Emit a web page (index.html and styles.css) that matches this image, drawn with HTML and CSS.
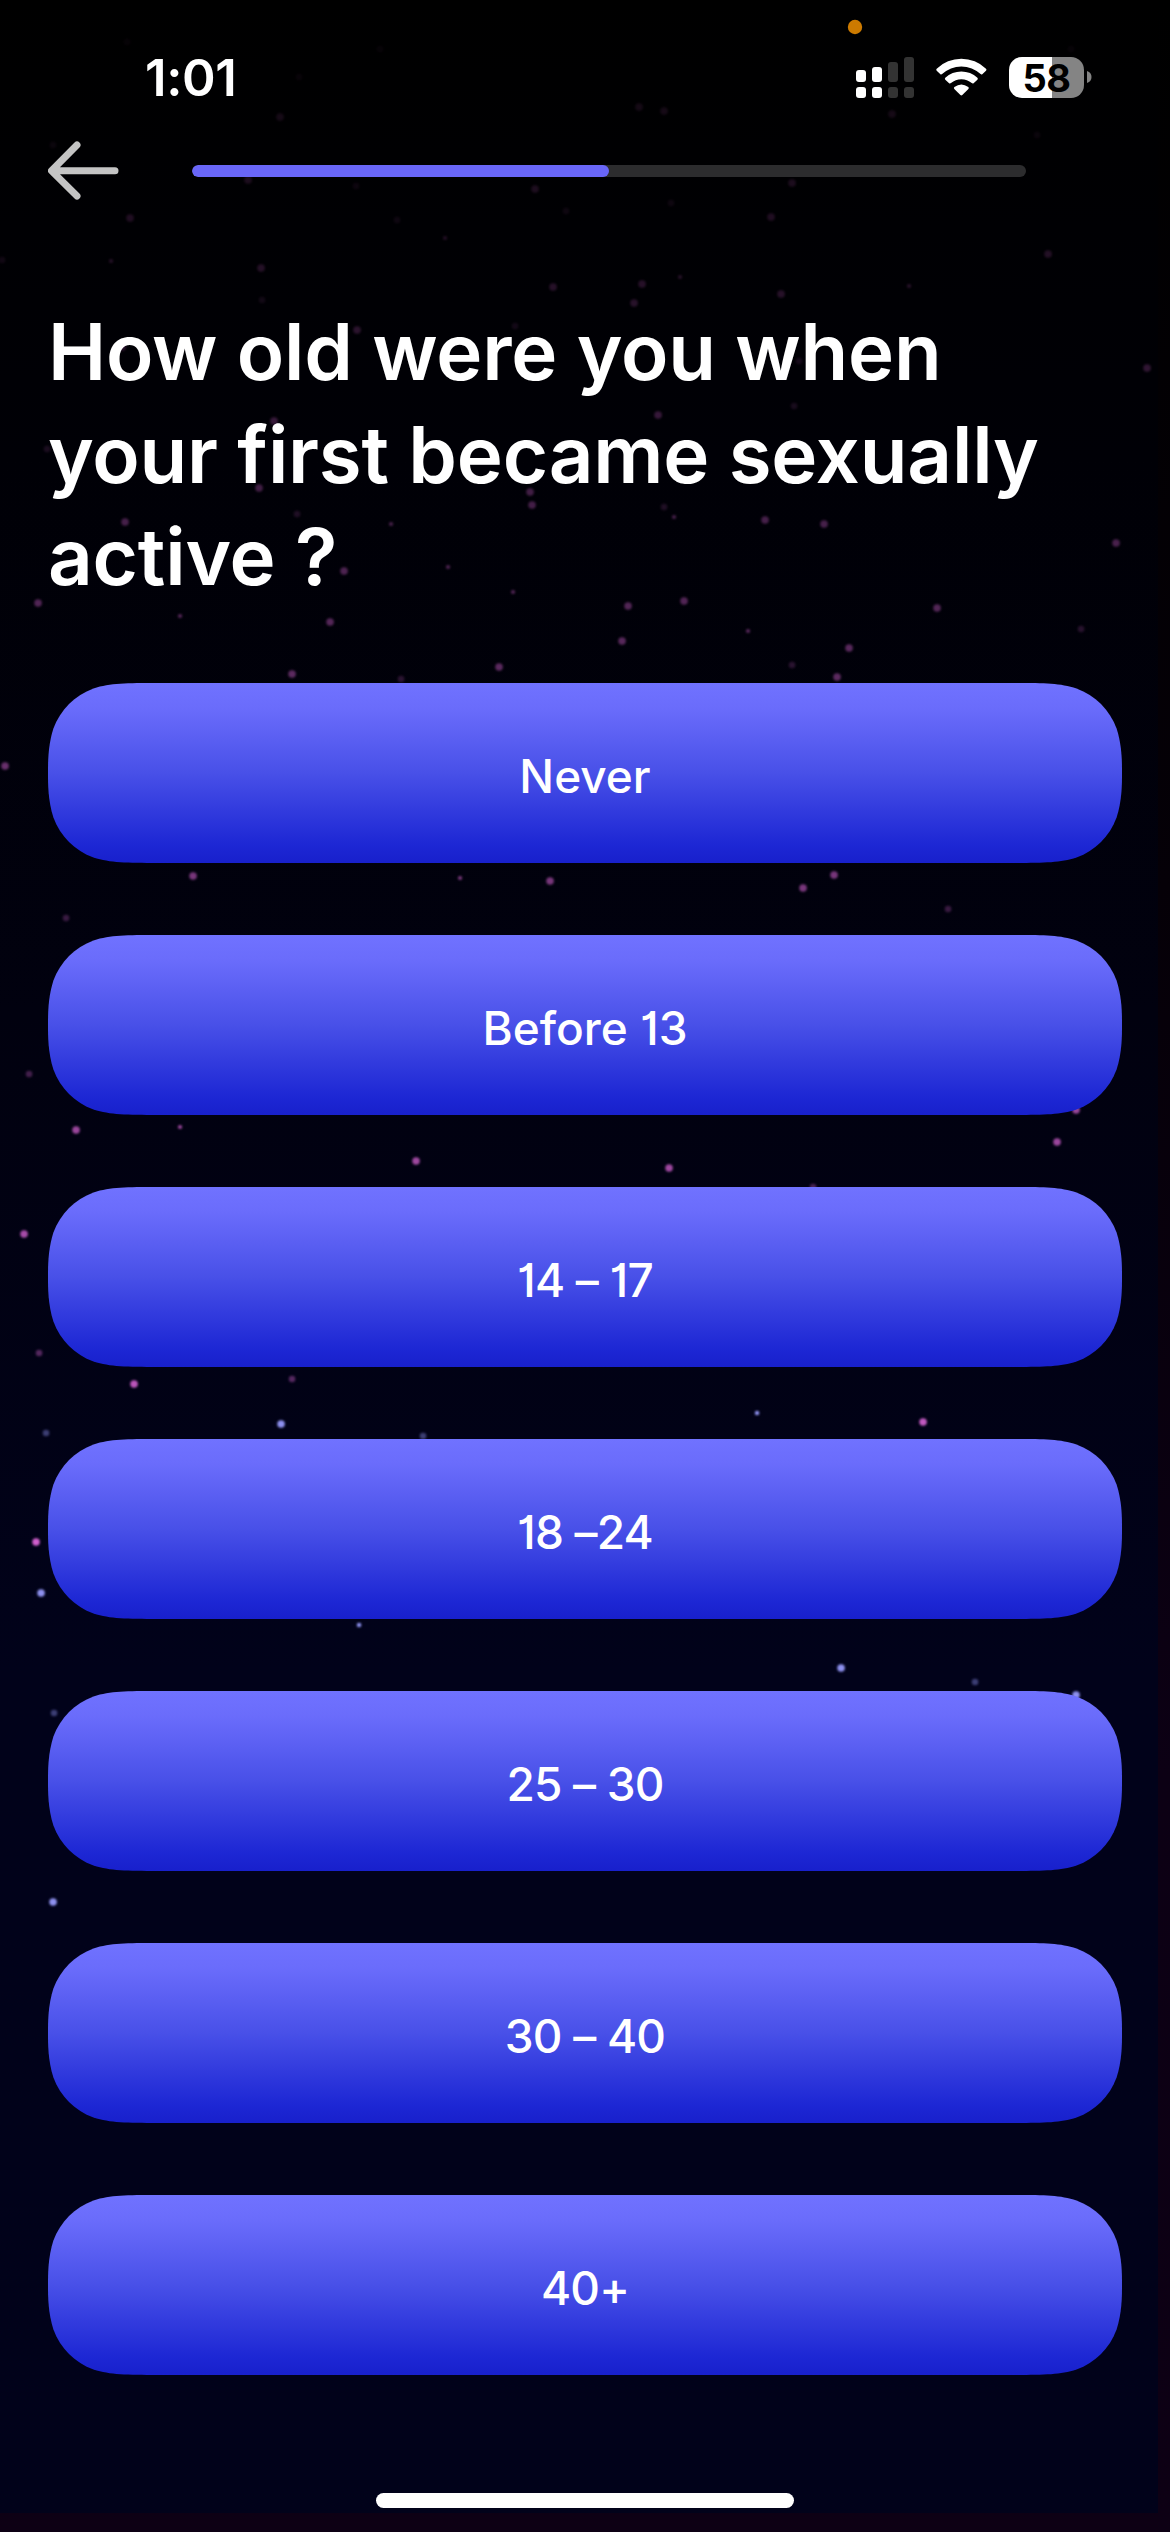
FILE: index.html
```html
<!DOCTYPE html>
<html lang="en">
<head>
<meta charset="utf-8">
<title>Question</title>
<link rel="stylesheet" href="styles.css">
</head>
<body>
<div class="screen">
  <svg class="sky" width="1170" height="2532" viewBox="0 0 1170 2532" aria-hidden="true">
    <defs>
      <linearGradient id="pink" gradientUnits="userSpaceOnUse" x1="0" y1="0" x2="0" y2="1600">
        <stop offset="0" stop-color="#d862d4" stop-opacity=".05"/>
        <stop offset=".2" stop-color="#d862d4" stop-opacity=".19"/>
        <stop offset=".4" stop-color="#d862d4" stop-opacity=".4"/>
        <stop offset="1" stop-color="#d862d4"/>
      </linearGradient>
      <filter id="soft" filterUnits="userSpaceOnUse" x="0" y="0" width="1170" height="2532"><feGaussianBlur stdDeviation="1"/></filter>
    </defs>
    <g fill="none" stroke-linecap="round" stroke="url(#pink)" filter="url(#soft)">
      <path stroke-width="7.5" d="M280 117h.1M639 107h.1M664 111h.1M892 114h.1M248 180h.1M535 189h.1M792 183h.1M130 218h.1M771 217h.1M1048 254h.1M261 268h.1M553 287h.1M642 284h.1M781 294h.1M634 303h.1M357 330h.1M122 347h.1M274 421h.1M259 488h.1M125 522h.1M530 492h.1M532 505h.1M344 571h.1M38 603h.1M1147 368h.1M658 415h.1M765 520h.1M824 524h.1M1116 543h.1M628 606h.1M684 601h.1M937 608h.1M330 622h.1M622 641h.1M849 648h.1M499 667h.1M292 674h.1M837 677h.1M5 766h.1M193 876h.1M550 881h.1M834 875h.1M803 888h.1M1076 1110h.1M76 1130h.1M416 1161h.1M669 1168h.1M1057 1142h.1M24 1234h.1M134 1384h.1M923 1422h.1M36 1542h.1"/>
      <path stroke-width="4.2" d="M111 261h.1M680 277h.1M909 286h.1M445 238h.1M391 524h.1M448 567h.1M513 592h.1M180 616h.1M674 517h.1M748 631h.1M460 878h.1M180 1127h.1"/>
      <path stroke-width="6.5" stroke-opacity=".45" d="M127 42h.1M380 49h.1M299 77h.1M53 145h.1M1071 49h.1M1037 135h.1M356 186h.1M671 203h.1M566 211h.1M397 220h.1M2 260h.1M262 300h.1M515 326h.1M47 449h.1M297 514h.1M799 361h.1M794 406h.1M664 507h.1M1081 629h.1M792 665h.1M401 679h.1M948 909h.1M66 918h.1M29 1074h.1M813 1187h.1M39 1353h.1M292 1379h.1"/>
    </g>
    <g fill="none" stroke-linecap="round" stroke="#8d90ee" filter="url(#soft)">
      <path stroke-width="7.5" d="M281 1424h.1M41 1593h.1M841 1668h.1M1076 1695h.1M53 1902h.1"/>
      <path stroke-width="4.5" d="M757 1413h.1M359 1625h.1"/>
      <path stroke-width="6.5" stroke-opacity=".42" d="M46 1433h.1M423 1436h.1M975 1682h.1M54 1713h.1"/>
    </g>
  </svg>

  <header class="status">
    <span class="clock">1:01</span>
    <svg class="indicators" width="240" height="100" viewBox="846 10 240 100" aria-hidden="true">
      <circle cx="855" cy="27" r="7.2" fill="#cc7a00"/>
      <g fill="#fff">
        <rect x="856" y="70" width="10" height="12" rx="3"/>
        <rect x="856" y="87" width="10" height="11" rx="3"/>
        <rect x="872" y="67" width="10" height="15" rx="3"/>
        <rect x="872" y="87" width="10" height="11" rx="3"/>
      </g>
      <g fill="#333">
        <rect x="888" y="62" width="10" height="20" rx="3"/>
        <rect x="888" y="87" width="10" height="11" rx="3"/>
        <rect x="904" y="57" width="10" height="25" rx="3"/>
        <rect x="904" y="87" width="10" height="11" rx="3"/>
      </g>
      <g fill="#fff">
        <path d="M936.700 68.700A35.500 35.500 0 0 1 986 68.700Q987 69.700 986 70.700L982.300 74.200Q981.500 74.900 980.600 74.100A28 28 0 0 0 942.100 74.100Q941.200 74.900 940.400 74.200L936.700 70.700Q935.700 69.700 936.700 68.700Z"/>
        <path d="M945.300 77.800A23.500 23.500 0 0 1 977.400 77.800Q978.300 78.800 977.400 79.700L973.600 83.200Q972.700 83.900 971.700 83.100A15.500 15.500 0 0 0 951 83.100Q950 83.900 949.100 83.200L945.300 79.700Q944.400 78.800 945.300 77.800Z"/>
        <path d="M954.400 87Q961.350 82 968.300 87Q969.300 87.900 968.400 88.900L962.300 95.100Q961.350 96 960.400 95.100L954.300 88.900Q953.400 87.900 954.400 87Z"/>
      </g>
    </svg>
    <span class="battery">58</span>
    <svg class="nub" width="5" height="12" viewBox="0 0 5 12" aria-hidden="true"><path d="M0 0Q4.500 1.500 4.500 6T0 12Z" fill="#848484"/></svg>
  </header>

  <nav class="topbar">
    <svg width="72" height="60" viewBox="48 141 72 60" fill="none" stroke="#c4c4c4" stroke-width="7" stroke-linecap="round" stroke-linejoin="round" aria-label="Back"><path d="M77 145L51.500 170.700L77 196M52 170.700H115"/></svg>
    <div class="progress"><div class="progress-fill"></div></div>
  </nav>

  <h1 class="question">
    <span class="line">How old were you when</span>
    <span class="line">your first became sexually</span>
    <span class="line">active ?</span>
  </h1>

  <main class="options">
    <button class="option">Never</button>
    <button class="option">Before 13</button>
    <button class="option option-range">14 – 17</button>
    <button class="option option-range">18 –24</button>
    <button class="option option-range">25 – 30</button>
    <button class="option option-range">30 – 40</button>
    <button class="option option-range">40+</button>
  </main>

  <div class="home-bar"></div>
</div>
</body>
</html>
```
FILE: styles.css
```css
* { box-sizing: border-box; }
body { margin: 0; background: #000; }

.screen {
  position: relative;
  display: flex;
  flex-direction: column;
  width: 1170px;
  height: 2532px;
  overflow: hidden;
  color: #fff;
  font-family: Inter, "Liberation Sans", sans-serif;
  background:
    linear-gradient(#0d0014, #0d0014) 0 2513px / 1170px 19px no-repeat,
    linear-gradient(#000, #050007 35%, #0c0014 70%, #0d0014) 1158px 0 / 12px 2532px no-repeat,
    linear-gradient(#000, #000006 18%, #01010f 40%, #01021a 66%, #01021a);
}
.sky { position: absolute; inset: 0; }
.status, .topbar, .question, .options, .home-bar { position: relative; }

.status {
  display: flex;
  height: 110px;
  padding: 10px 0 0 145px;
}
.clock {
  width: 701px;
  padding-top: 38px;
  font-size: 51px;
  font-weight: 600;
  line-height: 60px;
  letter-spacing: -0.4px;
}
.indicators { flex: none; margin-right: -77px; }
.battery {
  flex: none;
  width: 75px;
  height: 41px;
  margin-top: 47px;
  border-radius: 13px;
  background: linear-gradient(90deg, #fff 43px, #848484 43px);
  color: #000;
  font-size: 38px;
  font-weight: 700;
  line-height: 42px;
  letter-spacing: -0.5px;
  text-align: center;
}
.nub { margin: 61px 0 0 3px; }

.topbar {
  display: flex;
  align-items: center;
  gap: 72px;
  height: 60px;
  margin: 31px 0 0 48px;
}
.progress {
  width: 834px;
  height: 12px;
  border-radius: 6px;
  background: #2c2c2e;
  overflow: hidden;
}
.progress-fill { width: 417px; height: 12px; border-radius: 6px; background: #6966f8; }

.question {
  margin: 100px 0 0 48px;
  font-size: 78px;
  font-weight: 600;
  line-height: 102.5px;
  letter-spacing: -0.2px;
}
.line { display: block; white-space: nowrap; }

.options {
  display: flex;
  flex-direction: column;
  gap: 72px;
  padding: 74.500px 48px 0;
}
.option {
  height: 180px;
  padding: 5px 0 0;
  border: 0;
  background: linear-gradient(#7072ff, #6a6cfb 14%, #4850e8 50%, #1d27d4 90%, #1820cc);
  clip-path: path("M110 0H964C995.600 0 1011.500 0 1028.500 5.400C1047.200 12.200 1061.800 26.800 1068.600 45.500C1074 62.500 1074 78.400 1074 90C1074 101.600 1074 117.500 1068.600 134.500C1061.800 153.200 1047.200 167.800 1028.500 174.600C1011.500 180 995.600 180 964 180H110C78.400 180 62.500 180 45.500 174.600C26.800 167.800 12.200 153.200 5.400 134.500C0 117.500 0 101.600 0 90C0 78.400 0 62.500 5.400 45.500C12.200 26.800 26.800 12.200 45.500 5.400C62.500 0 78.400 0 110 0Z");
  color: #fff;
  font: 500 46px/56px Inter, "Liberation Sans", sans-serif;
  font-feature-settings: "cv01";
}
.option-range { letter-spacing: -0.8px; }

.home-bar {
  width: 418px;
  height: 15px;
  margin: 118px auto 0;
  border-radius: 7.500px;
  background: #fff;
}
```
